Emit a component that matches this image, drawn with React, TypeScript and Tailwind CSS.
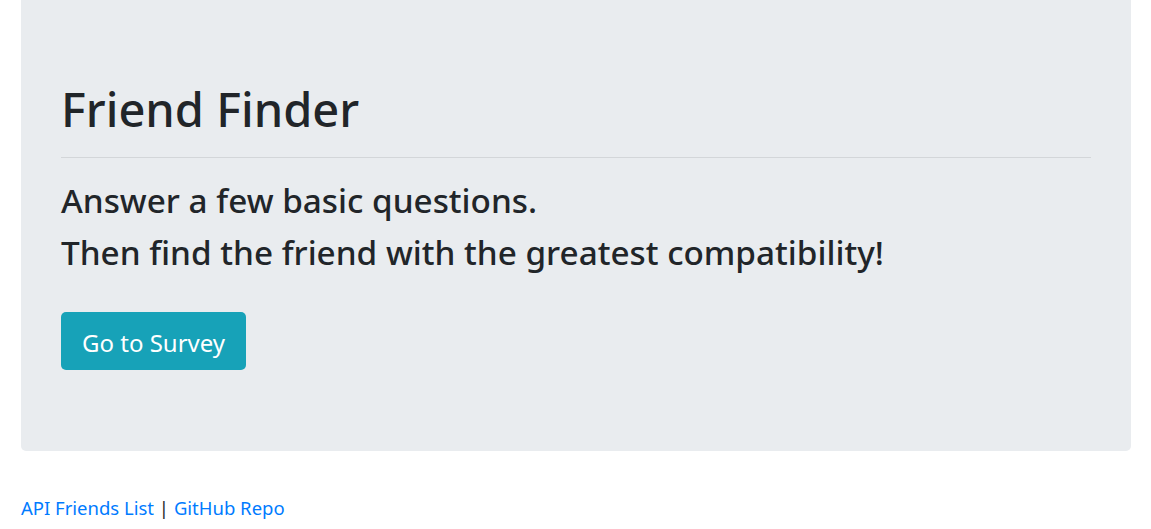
export default function App() {
  return (
    <div
      className="min-h-[529px] bg-white pl-[21px] pr-[20px] text-[#212529]"
      style={{ fontFamily: '"Noto Sans", "Open Sans", sans-serif' }}
    >
      {/* Jumbotron */}
      <div className="h-[451px] rounded-b-[5px] bg-[#e9ecef] px-[40px] pt-[78px]">
        <h1 className="text-[47px] font-medium leading-[62px]">Friend Finder</h1>
        <hr className="mt-[17px] border-t border-[#d3d6d9]" />
        <div className="mt-[16px] text-[33.3px] font-medium leading-[52px]">
          <p>Answer a few basic questions.</p>
          <p>Then find the friend with the greatest compatibility!</p>
        </div>
        <a
          href="#"
          className="mt-[34px] inline-flex h-[58px] items-center rounded-[5px] bg-[#17a2b8] px-[21px] pt-[3px] text-[24px] text-white"
        >
          Go to Survey
        </a>
      </div>

      {/* Footer links */}
      <div className="mt-[43px] text-[18.5px] leading-[27px]">
        <a href="#" className="text-[#007bff]">
          API Friends List
        </a>{" "}
        |{" "}
        <a href="#" className="text-[#007bff]">
          GitHub Repo
        </a>
      </div>
    </div>
  );
}
